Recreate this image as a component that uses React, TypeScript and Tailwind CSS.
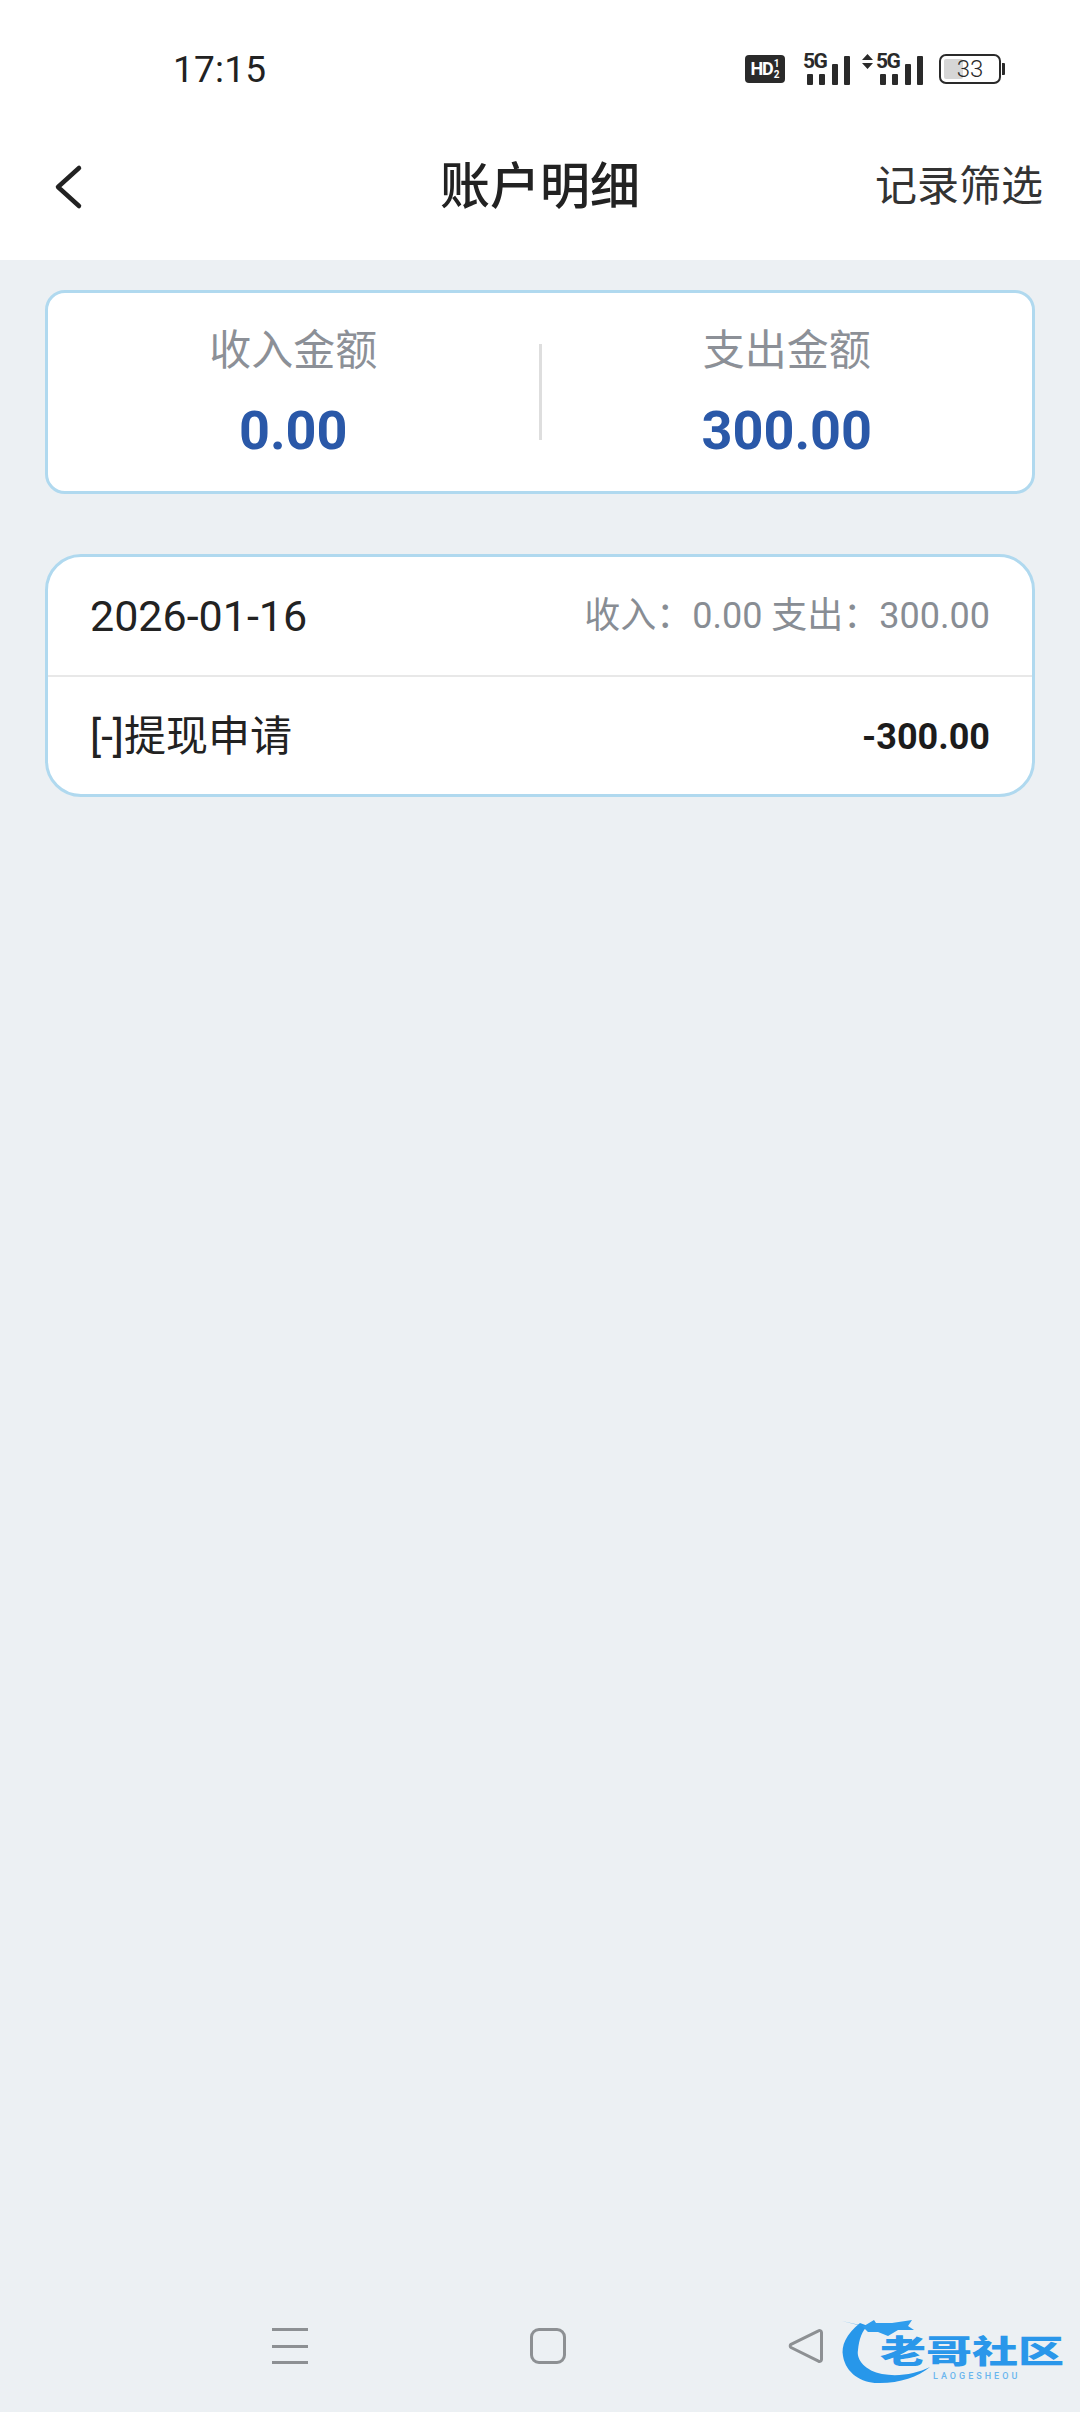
const SANS = "font-['Roboto','Noto_Sans_CJK_SC',sans-serif]";

function SignalBars() {
  return (
    <div className="flex items-end justify-between w-[43px]">
      <span className="h-[11px] w-[6px] rounded-[1px] bg-[#2a2a2a]" />
      <span className="h-[11px] w-[6px] rounded-[1px] bg-[#2a2a2a]" />
      <span className="h-[21px] w-[6px] rounded-[1px] bg-[#2a2a2a]" />
      <span className="h-[29px] w-[6px] rounded-[1px] bg-[#2a2a2a]" />
    </div>
  );
}

function FiveG({ arrows }: { arrows?: boolean }) {
  return (
    <div className="relative flex h-[32px] w-[47px] items-end justify-end">
      <span className="absolute left-0 top-[-3px] text-[21px] font-bold leading-[22px] tracking-[-1.5px] text-[#2a2a2a]">5G</span>
      {arrows ? (
        <svg className="absolute left-[-14px] top-[1px]" width="11" height="15" viewBox="0 0 11 15">
          <path d="M5.5 0 11 6H0zM0 9h11l-5.5 6z" fill="#2a2a2a" />
        </svg>
      ) : null}
      <SignalBars />
    </div>
  );
}

function StatusBar() {
  return (
    <div className="flex h-[138px] items-center justify-between pl-[173px] pr-[75px]">
      <span className="text-[37px] leading-none text-[#222] tracking-[0.2px]">17:15</span>
      <div className="flex items-center">
        <div className="flex h-[28px] w-[40px] items-center justify-center rounded-[4px] bg-[#2a2a2a] text-white">
          <span className="text-[18px] font-bold leading-none tracking-[-1px]">HD</span>
          <span className="ml-[1px] flex flex-col text-[10px] font-bold leading-[11px]">
            <span>1</span>
            <span>2</span>
          </span>
        </div>
        <div className="ml-[18px]">
          <FiveG />
        </div>
        <div className="ml-[26px]">
          <FiveG arrows />
        </div>
        <div className="ml-[16px] flex items-center">
          <div className="flex h-[30px] w-[62px] items-center rounded-[7px] border-2 border-[#2a2a2a] p-[3px]">
            <div className="relative h-full w-[52px]">
              <div className="h-full w-[19px] rounded-[2px] bg-[#d6d6d6]" />
              <span className="absolute inset-0 text-center text-[24px] font-light leading-[20px] text-[#2a2a2a]">33</span>
            </div>
          </div>
          <span className="ml-[1px] h-[12px] w-[3px] rounded-r-[1px] bg-[#2a2a2a]" />
        </div>
      </div>
    </div>
  );
}

function Header() {
  return (
    <header className="grid h-[122px] grid-cols-[1fr_auto_1fr] items-center pb-[25px]">
      <svg className="ml-[54px]" width="30" height="46" viewBox="0 0 30 46" fill="none">
        <path d="M25 4 4 23l21 19" stroke="#222" strokeWidth="4.5" strokeLinecap="round" strokeLinejoin="round" />
      </svg>
      <h1 className="text-[50px] font-medium leading-none text-[#222]">账户明细</h1>
      <span className="justify-self-end pr-[37px] text-[42px] leading-none text-[#333]">记录筛选</span>
    </header>
  );
}

function Stat({ label, value }: { label: string; value: string }) {
  return (
    <div className="flex flex-1 flex-col items-center">
      <span className="mt-[2px] text-[42px] leading-[50px] text-[#8c9097]">{label}</span>
      <span className="mt-[25px] text-[54px] font-bold leading-[60px] text-[#2a58a8]">{value}</span>
    </div>
  );
}

function DetailCard() {
  return (
    <section className="mx-[45px] mt-[60px] h-[243px] rounded-[36px] border-[3px] border-[#b0d9ef] bg-white">
      <div className="flex h-[120px] items-center justify-between border-b-2 border-[#e8e8e8] px-[42px]">
        <span className="text-[43px] leading-none text-[#222]">2026-01-16</span>
        <span className="text-[36px] leading-none text-[#888d94]">收入：0.00 支出：300.00</span>
      </div>
      <div className="flex h-[117px] items-center justify-between px-[42px] pt-[3px]">
        <span className="text-[42px] leading-none text-[#222]">[-]提现申请</span>
        <span className="text-[36px] font-bold leading-none text-[#1c1c1c]">-300.00</span>
      </div>
    </section>
  );
}

function Watermark() {
  return (
    <div className="absolute left-[838px] top-[2314px] h-[84px] w-[230px]">
      <svg className="absolute left-0 top-0" width="100" height="84" viewBox="0 0 100 84">
        <path d="M22 9C8 20 3 32 5 42c3 18 20 28 37 27 20 0 38-6 50-16-14 7-32 10-48 7-16-3-26-14-24-24 1-10 4-20 10-24z" fill="#2797ea" />
        <path d="M4 7l22 5 10-6 2 3h16l20-3-4 6 6 4H60l-10 6-10-4H30l-6-6z" fill="#2f9ded" />
      </svg>
      <span className="absolute left-[42px] top-[22px] origin-top scale-y-[0.68] whitespace-nowrap text-[46px] font-black leading-[46px] text-[#2a97ea]">老哥社区</span>
      <span className="absolute left-[95px] top-[57px] text-[9px] font-medium leading-[10px] tracking-[3px] text-[#6ab6ee]">LAOGESHEOU</span>
    </div>
  );
}

function NavBar() {
  return (
    <nav className="flex h-[84px] items-start pl-[272px]">
      <div className="flex h-[36px] w-[36px] flex-col justify-between">
        <span className="h-[3px] bg-[#8d9093]" />
        <span className="h-[3px] bg-[#8d9093]" />
        <span className="h-[3px] bg-[#8d9093]" />
      </div>
      <div className="ml-[222px] h-[36px] w-[36px] rounded-[9px] border-[3px] border-[#8d9093]" />
      <svg className="ml-[222px]" width="36" height="36" viewBox="0 0 36 36" fill="none">
        <path d="M33.5 4.5v27a2 2 0 0 1-3 1.7L3 19.5a2 2 0 0 1 0-3.2L30.5 2.8a2 2 0 0 1 3 1.7z" stroke="#8d9093" strokeWidth="3" strokeLinejoin="round" />
      </svg>
    </nav>
  );
}

export default function App() {
  return (
    <div className={`relative flex h-[2412px] w-[1080px] flex-col overflow-hidden bg-[#ecf0f3] ${SANS}`}>
      <div className="bg-white">
        <StatusBar />
        <Header />
      </div>
      <main className="flex-1 pt-[30px]">
        <section className="mx-[45px] flex h-[204px] items-center rounded-[20px] border-[3px] border-[#b0d9ef] bg-white">
          <Stat label="收入金额" value="0.00" />
          <div className="h-[96px] w-[3px] bg-[#dedede]" />
          <Stat label="支出金额" value="300.00" />
        </section>
        <DetailCard />
      </main>
      <NavBar />
      <Watermark />
    </div>
  );
}
